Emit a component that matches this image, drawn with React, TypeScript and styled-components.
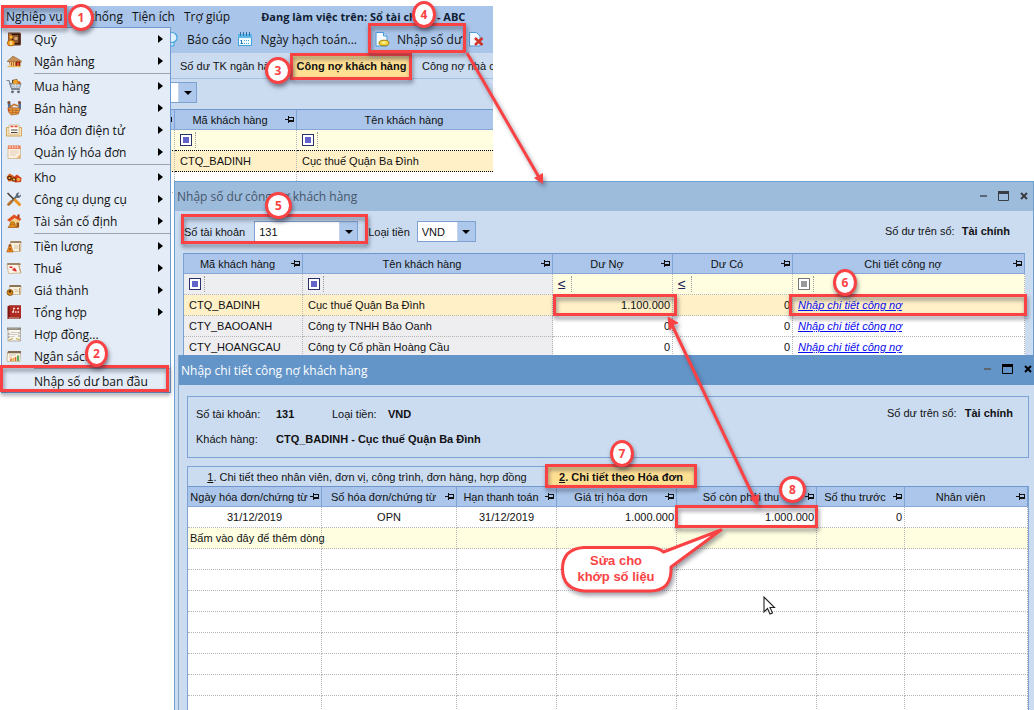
import React from "react";
import styled, { createGlobalStyle, css } from "styled-components";

const UI = `"Open Sans", "Noto Sans", sans-serif`;
const GRID = `"Liberation Sans", Arial, sans-serif`;
const RED = "#fa4244";

const Global = createGlobalStyle`
  *, *::before, *::after { box-sizing: border-box; }
  html, body { margin: 0; height: 100%; background: #fff; }
  body { font-family: ${GRID}; font-size: 11px; color: #111; overflow: hidden; }
  button, select { font: inherit; color: inherit; margin: 0; }
  button { border: 0; background: none; padding: 0; }
  a { color: #0a0af0; }
`;

const Desktop = styled.main`
  position: relative;
  min-height: 100vh;
  overflow: hidden;
  background: #fff;
`;

/* ---------- windows ---------- */

const AppWindow = styled.section`
  position: absolute;
  left: 1px;
  top: 6px;
  width: 492px;
  overflow: hidden;
  background: #cbdbf0;
`;

const BalanceWindow = styled.section`
  position: absolute;
  left: 174px;
  right: 0;
  top: 181px;
  bottom: 0;
  overflow: hidden;
  background: #cbdcf1;
  border: 1px solid #6d9fd2;
  border-bottom: 0;
`;

const DetailWindow = styled.section`
  position: absolute;
  left: 178px;
  right: 0;
  top: 355px;
  bottom: 0;
  overflow: hidden;
  background: #cbdcf1;
  border-left: 1px solid #86a6c8;
`;

const TitleBar = styled.header<{ $active?: boolean }>`
  display: flex;
  align-items: center;
  height: ${(p) => (p.$active ? 30 : 29)}px;
  padding: 0 ${(p) => (p.$active ? 0 : 3)}px 0 2px;
  font-family: ${UI};
  font-size: 12px;
  color: ${(p) => (p.$active ? "#fff" : "#46566a")};
  background: ${(p) => (p.$active ? "#6495c9" : "#9dbbdb")};
`;

const WindowTitle = styled.h2`
  flex: 1;
  margin: 0;
  font-size: 12px;
  font-weight: 400;
`;

const WindowButtons = styled.div<{ $dark?: boolean }>`
  display: flex;
  gap: 8px;
  padding-bottom: 2px;
  color: ${(p) => (p.$dark ? "#000" : "#3a3d42")};
  button { display: flex; width: 12px; height: 12px; }
`;

/* ---------- main window bars ---------- */

const MenuBar = styled.nav`
  display: flex;
  align-items: center;
  height: 21px;
  padding-left: 5px;
  gap: 9px;
  font-family: ${UI};
  font-size: 12px;
  white-space: nowrap;
  background: #a9c5e9;
`;

const MenuButton = styled.button`
  white-space: nowrap;
`;

const BookStatus = styled.strong`
  margin-left: 22px;
  font-size: 11px;
  font-weight: 700;
  color: #0f1c33;
`;

const Toolbar = styled.div`
  display: flex;
  align-items: center;
  height: 26px;
  padding: 0 0 2px 163px;
  font-family: ${UI};
  font-size: 12px;
  white-space: nowrap;
  background: #a9c5e9;
`;

const ToolButton = styled.button`
  display: flex;
  flex: none;
  align-items: center;
  gap: 7px;
  margin-right: 6px;
`;

const Grip = styled.span`
  width: 3px;
  height: 18px;
  margin: 0 3px 0 5px;
  border-left: 2px dotted #8aa9d3;
`;

const TabStrip = styled.div`
  display: flex;
  height: 26px;
  padding-left: 167px;
  align-items: stretch;
  background: #cbdcf1;
  border-bottom: 1px solid #a3bfe2;
`;

const MainTab = styled.button<{ $active?: boolean; $width?: number }>`
  flex: none;
  overflow: hidden;
  white-space: nowrap;
  text-align: left;
  ${(p) =>
    p.$active
      ? css`
          width: 117px;
          text-align: center;
          font-weight: 700;
          background: #ffdf92;
        `
      : css`
          width: ${p.$width}px;
          padding-left: 12px;
        `}
`;

const FilterPanel = styled.div`
  display: flex;
  height: 30px;
  padding: 3px 0 0 64px;
`;

const AppGrid = styled.div`
  margin-right: -20px;
`;

/* ---------- combo box ---------- */

const ComboFrame = styled.span<{ $width: number }>`
  display: grid;
  grid-template-columns: 1fr 18px;
  width: ${(p) => p.$width}px;
  height: 21px;
  border: 1px solid #7da2d2;
  background: #fff;
  select {
    grid-area: 1 / 1 / 2 / 3;
    min-width: 0;
    padding: 0 0 0 4px;
    border: 0;
    background: transparent;
    appearance: none;
    outline: 0;
  }
`;

const ComboArrow = styled.span`
  grid-area: 1 / 2;
  display: flex;
  align-items: center;
  justify-content: center;
  border-left: 1px solid #c3d5ec;
  background: #adc8eb;
  pointer-events: none;
`;

function Combo({ id, value, width, label }: { id: string; value: string; width: number; label?: string }) {
  return (
    <ComboFrame $width={width}>
      <ComboArrow>
        <svg width="8" height="4" viewBox="0 0 8 4"><path d="M0 0h8L4 4z" fill="#000" /></svg>
      </ComboArrow>
      <select id={id} defaultValue={value} aria-label={label}>
        <option value={value}>{value}</option>
      </select>
    </ComboFrame>
  );
}

/* ---------- grids ---------- */

const Grid = styled.table`
  width: 100%;
  table-layout: fixed;
  border-collapse: separate;
  border-spacing: 0;
  background: #fff;
`;

const Th = styled.th`
  height: 21px;
  padding: 0 1px 0 0;
  font-weight: 400;
  background: #abc6ea;
  border-top: 1px solid #7096cf;
  border-bottom: 1px solid #86a8d8;
  border-right: 1px solid #7ea3d6;
  & > div { display: flex; align-items: center; }
  span { flex: 1; white-space: nowrap; text-align: center; }
  svg { flex: none; }
`;

type Tone = "plain" | "filter" | "locked" | "current" | "new";
const tones: Record<Tone, string> = {
  plain: "#fff",
  filter: "#fffee0",
  locked: "#eeeef1",
  current: "#fff0c8",
  new: "#fffee0",
};

const Td = styled.td<{ $tone?: Tone; $align?: "left" | "center" | "right"; $strong?: boolean }>`
  height: 21px;
  padding: 0 2px 0 ${(p) => (p.$align ? 2 : 5)}px;
  overflow: visible;
  white-space: nowrap;
  text-align: ${(p) => p.$align ?? "left"};
  background: ${(p) => tones[p.$tone ?? "plain"]};
  border-right: 1px dotted #b5b5b5;
  border-bottom: 1px dotted ${(p) => (p.$strong ? "#000" : "#b5b5b5")};
`;

const FilterMark = styled.button<{ $muted?: boolean }>`
  display: flex;
  align-items: center;
  width: 16px;
  height: 16px;
  border-right: 1px dotted #999;
  &::before {
    content: "";
    width: 12px;
    height: 12px;
    border: 1px solid ${(p) => (p.$muted ? "#77777a" : "#2b2f6e")};
    background: ${(p) => (p.$muted ? "#999" : "#6264cc")};
    box-shadow: inset 0 0 0 2px #fff;
  }
`;

const CompareMark = styled.button`
  display: block;
  width: 14px;
  height: 16px;
  text-align: left;
  font-size: 14px;
  line-height: 16px;
  color: #23265c;
  border-right: 1px dotted #999;
`;

const Pin = () => (
  <svg width="10" height="7" viewBox="0 0 10 7" shapeRendering="crispEdges" fill="#111">
    <rect x="0" y="3" width="3" height="1" />
    <rect x="3" y="0" width="1" height="7" />
    <rect x="4" y="1" width="5" height="1" />
    <rect x="8" y="1" width="1" height="4" />
    <rect x="4" y="4" width="5" height="2" />
  </svg>
);

const Head = ({ children, pin = true }: { children?: React.ReactNode; pin?: boolean }) => (
  <Th scope="col">
    <div>
      <span>{children}</span>
      {pin && <Pin />}
    </div>
  </Th>
);

/* ---------- balance window body ---------- */

const BalanceForm = styled.form`
  display: flex;
  align-items: flex-start;
  padding: 10px 23px 10px 9px;
  label { line-height: 22px; }
`;

const FieldPair = styled.div<{ $gap: number; $after?: number }>`
  display: flex;
  gap: ${(p) => p.$gap}px;
  margin-right: ${(p) => p.$after ?? 0}px;
`;

const BookNote = styled.p`
  margin: 0 0 0 auto;
  line-height: 20px;
  strong { margin-left: 4px; }
`;

const BalanceGrid = styled.div`
  margin: 0 8px 0 8px;
  border-left: 1px solid #7da2d2;
`;

/* ---------- detail window body ---------- */

const InfoBox = styled.div`
  display: flex;
  justify-content: space-between;
  margin: 11px 5px 8px 8px;
  padding: 4px 15px 6px 8px;
  border: 1px solid #7ea2d6;
`;

const InfoList = styled.dl`
  display: grid;
  grid-template-columns: 80px 56px 56px auto;
  grid-auto-rows: 25px;
  align-items: center;
  margin: 0;
  dd { margin: 0; font-weight: 700; white-space: nowrap; }
  dd.wide { grid-column: 2 / 5; }
`;

const InfoNote = styled.p`
  margin: 0;
  line-height: 24px;
  strong { margin-left: 5px; }
`;

const DetailTabs = styled.div`
  display: flex;
  height: 20px;
  margin: 0 5px 0 8px;
`;

const DetailTab = styled.button<{ $active?: boolean }>`
  width: ${(p) => (p.$active ? 148 : 360)}px;
  border: 1px solid #7ea2d6;
  border-bottom: 0;
  white-space: nowrap;
  ${(p) => p.$active && css`font-weight: 700; background: #ffdf92;`}
`;

const DetailGrid = styled.div`
  margin: 0 5px 0 8px;
  border-left: 1px solid #7da2d2;
  border-right: 1px solid #7da2d2;
  td:first-child { padding-left: 2px; }
`;

/* ---------- drop-down menu ---------- */

const Popup = styled.ul`
  position: absolute;
  left: 1px;
  top: 27px;
  width: 170px;
  margin: 0;
  padding: 0;
  list-style: none;
  background: #e3ecf7;
  border: 1px solid #6d9ad0;
  font-family: ${UI};
  font-size: 12px;
`;

const PopupItem = styled.li<{ $divided?: boolean }>`
  ${(p) =>
    p.$divided &&
    css`
      padding-bottom: 1px;
      &::after {
        content: "";
        display: block;
        height: 1px;
        margin: 1px 0 0 32px;
        background: #9ba3ad;
      }
    `}
  button {
    display: grid;
    grid-template-columns: 16px 1fr 5px;
    column-gap: 12px;
    align-items: center;
    width: 100%;
    height: 22px;
    padding: 0 7px 0 4px;
    text-align: left;
    white-space: nowrap;
  }
`;

const Icon = ({ children, size = 16 }: { children: React.ReactNode; size?: number }) => (
  <svg width={size} height={size} viewBox="0 0 16 16">{children}</svg>
);

const icons: Record<string, React.ReactNode> = {
  safe: (
    <Icon>
      <path d="M2 1.500h12l1 1v11l-1 1H2z" fill="#6b3a22" />
      <path d="M2.500 2l3 1v11l-3-.500z" fill="#b3764a" />
      <path d="M6 3h7.500v10H6z" fill="#2d1208" />
      <path d="M7 4h5.500v8H7z" fill="#8f5631" />
      <circle cx="10" cy="7.500" r="1.800" fill="#d9a877" />
      <circle cx="5" cy="6" r="2" fill="#f4b32f" stroke="#a35d10" strokeWidth=".6" />
      <ellipse cx="5" cy="12" rx="3.800" ry="3" fill="#f09c1d" stroke="#96480a" strokeWidth=".6" />
      <path d="M5 10v4M3.800 11h2.400M3.800 13h2.400" stroke="#fff0b5" strokeWidth=".8" />
    </Icon>
  ),
  bank: (
    <Icon>
      <path d="M1 8.500L7 3l8.500 5-.5 1.500z" fill="#c79058" stroke="#8c5a30" strokeWidth=".6" />
      <path d="M3 8.500h11.500V13H4z" fill="#b3682c" />
      <path d="M4.500 9v4M6.500 9v4M8.500 9v4" stroke="#f0c27a" strokeWidth="1" />
      <path d="M10 8.500h4V13h-4z" fill="#8b2412" />
      <path d="M11 9.500h2V13h-2z" fill="#e05326" />
      <path d="M1.500 13.500h13.500" stroke="#e8b85a" strokeWidth="1.400" />
    </Icon>
  ),
  cart: (
    <Icon>
      <path d="M.5 2.500h2.500L6 11.500h8" stroke="#7b8794" fill="none" strokeWidth="1.200" />
      <path d="M3.500 5.500h11.500l-1.500 5H5.500z" fill="#9aa7b4" stroke="#5e6b78" strokeWidth=".7" />
      <path d="M6 2l5-1 2 4H6z" fill="#5a4636" />
      <circle cx="9.500" cy="4" r="2.500" fill="#f0a32b" />
      <circle cx="13" cy="4.500" r="1.600" fill="#cf6a1a" />
      <path d="M5 7.500h9.500M5.500 9.200h8.500M7 6v4M9.500 6v4M12 6v4" stroke="#e6edf3" strokeWidth=".6" />
      <circle cx="6.500" cy="13.800" r="1.400" fill="#59646f" />
      <circle cx="12.500" cy="13.800" r="1.400" fill="#59646f" />
    </Icon>
  ),
  basket: (
    <Icon>
      <path d="M1.500 2h2.500l1.500 6-3 3z" fill="#4d6f97" />
      <path d="M12.500 2h2.500v7l-3 3z" fill="#54709a" />
      <circle cx="3" cy="2.500" r="1.400" fill="#8a4b28" />
      <circle cx="13.500" cy="2.500" r="1.400" fill="#8a4b28" />
      <path d="M4 7l4-2.500L12.500 6" stroke="#c97a35" strokeWidth="1.800" fill="none" />
      <path d="M2 7.500l12 .500-1.500 6L5 15l-2.500-3z" fill="#e39a45" stroke="#a2581a" strokeWidth=".6" />
      <path d="M3 10l10.500.500M4 12.500h9M6.500 8v6.500M10 8v6" stroke="#b9641f" strokeWidth=".7" />
      <path d="M1.500 8l2.500 2-1 2z" fill="#cf3d1c" />
    </Icon>
  ),
  einvoice: (
    <Icon>
      <path d="M.5 5.500h15V14H.5z" fill="#f6e3b8" stroke="#d0a050" strokeWidth=".9" />
      <path d="M3 3h10v9H3z" fill="#fffdf8" stroke="#c9ac7c" strokeWidth=".7" />
      <path d="M4.500 4.500h3M8.500 4.500h3" stroke="#e4482c" strokeWidth="1.600" />
      <path d="M5 8h6.500M5 10.500h6.500" stroke="#4d4238" strokeWidth="1.200" />
    </Icon>
  ),
  invoices: (
    <Icon>
      <path d="M2 2h12.500v12.500H2z" fill="#fbf0e0" stroke="#d0b48c" strokeWidth=".8" />
      <path d="M2 1.500h12.500V5H2z" fill="#ef8465" />
      <path d="M4 2v2M6.500 2v2M9 2v2M11.500 2v2" stroke="#fde7dc" strokeWidth=".8" />
      <path d="M4 7h8.500M4 9h8.500M4 11h6" stroke="#e0c4ae" strokeWidth=".8" />
      <path d="M10 14.500l4.500-4.500v4.500z" fill="#e9b57a" />
    </Icon>
  ),
  stock: (
    <Icon>
      <path d="M.5 8l3-3.500L8 7l-.5 5-5 .5z" fill="#d9601d" />
      <path d="M7 8.500l4-3 4.500 3.500-.5 4-6 .5z" fill="#d33f1c" />
      <circle cx="3.500" cy="9" r="2.300" fill="#5e2509" />
      <circle cx="3.500" cy="9" r="1.100" fill="#f4b747" />
      <circle cx="8" cy="10.500" r="2.200" fill="#6b3008" />
      <circle cx="8" cy="10.500" r="1.100" fill="#f7c95c" />
      <circle cx="12.500" cy="10.500" r="1.800" fill="#f0a83a" />
    </Icon>
  ),
  tools: (
    <Icon>
      <path d="M3.500 12.500L11 5" stroke="#5d6a78" strokeWidth="2" />
      <path d="M10 5.500a3 3 0 0 1 3.500-4L12 3.500l.5 1 1.200.200L15 3.300a3 3 0 0 1-4 3.500z" fill="#5d6a78" />
      <path d="M2 2.500l6 6" stroke="#4b4038" strokeWidth="1.700" strokeLinecap="round" />
      <path d="M9 9l4.500 4.500" stroke="#ec9320" strokeWidth="3" strokeLinecap="round" />
      <path d="M2.500 13.500l3-3" stroke="#b5722c" strokeWidth="2.800" strokeLinecap="round" />
    </Icon>
  ),
  house: (
    <Icon>
      <path d="M1 7l7-5.500L15.500 6l-2 2-5-3L4 9z" fill="#e0531f" />
      <path d="M11.500 1.500h2V5h-2z" fill="#b43213" />
      <path d="M4 8.500l4.500-3L13.500 8v6.500H4z" fill="#f7d38a" />
      <path d="M10.500 9.500h2.500v5h-2.500z" fill="#96501a" />
      <circle cx="6.500" cy="11" r="2.300" fill="#f3a71e" stroke="#8d4a0a" strokeWidth=".7" />
      <path d="M2 14.500l2.500-3.500h4L11 14.500z" fill="#e58a1c" stroke="#8d4a0a" strokeWidth=".6" />
    </Icon>
  ),
  payroll: (
    <Icon>
      <path d="M4.500 4H15l-.5 9.500H4z" fill="#f9efdc" stroke="#c4ae88" strokeWidth=".8" />
      <path d="M4.500 3h10.500l.5 2H4.500z" fill="#a08767" />
      <path d="M13.500 6v7" stroke="#c39a67" />
      <path d="M8 8h4.500M8 10h4.500" stroke="#ccbb9f" strokeWidth=".8" />
      <circle cx="4" cy="7.500" r="1.500" fill="#a3551f" />
      <path d="M.8 14l2-5.500h2.400l2 5.500z" fill="#ef8a1e" stroke="#a8520c" strokeWidth=".6" />
      <path d="M4 10v2.500" stroke="#7c3606" />
    </Icon>
  ),
  tax: (
    <Icon>
      <path d="M1 4.500h11.500L15 13 2.500 13.500z" fill="#fcf4e8" stroke="#c4ae88" strokeWidth=".8" />
      <path d="M1 3h13l1 2H1.500z" fill="#a08767" />
      <path d="M3.500 7l3 .5M6.500 9.500l4 1.500M8 8l1.500 3" stroke="#e0332f" strokeWidth="1.700" />
      <path d="M13 5.500l1.500 7" stroke="#c39a67" />
    </Icon>
  ),
  costing: (
    <Icon>
      <path d="M3.500 4.500H15l-.5 8H4z" fill="#f9efdc" stroke="#c4ae88" strokeWidth=".8" />
      <path d="M3.500 3h11l1 2h-12z" fill="#8d7456" />
      <path d="M8 7.500l4 .5M8.500 9.500h4" stroke="#ccbb9f" strokeWidth=".8" />
      <path d="M13.500 6v6" stroke="#c39a67" />
      <circle cx="4" cy="10.500" r="3" fill="#d68a1a" stroke="#71420b" strokeWidth=".7" />
      <circle cx="4" cy="9.500" r="1.200" fill="#4b2a08" />
    </Icon>
  ),
  ledger: (
    <Icon>
      <path d="M1.500 2.500l1.500-1h12v12.500l-1.500 1h-12z" fill="#7d1613" />
      <path d="M3.500 1.500H15V13H3.500z" fill="#b02a24" />
      <path d="M7 4.500h2M11 4.500h2M6 8h2M9 8h1.500M11.500 8h1.500M7 6.500h1" stroke="#f9e2d6" strokeWidth="1.400" />
      <path d="M2.500 14h11" stroke="#e6cdb8" strokeWidth="1" />
    </Icon>
  ),
  contract: (
    <Icon>
      <path d="M2 3h12.500v12H2z" fill="#f8f6ef" stroke="#a5a196" strokeWidth=".8" />
      <path d="M1 1.500h14v2.500H1z" fill="#8c887c" />
      <path d="M2.500 2.800h10" stroke="#d8d4c8" strokeWidth=".7" strokeDasharray="1 1" />
      <path d="M4.500 6.500h7M4.500 8.500h7M4.500 10.500h4" stroke="#c3bfb4" strokeWidth=".8" />
      <path d="M3 7v6M13 6v5" stroke="#76726a" strokeWidth=".8" strokeDasharray="2 1" />
      <path d="M3 14l4-1.500M10 12.500l4 1.500" stroke="#c6a94c" strokeWidth="1.200" />
    </Icon>
  ),
  budget: (
    <Icon>
      <path d="M1.500 4.500h13L14 13.500H1z" fill="#fbf3e4" stroke="#c4ae88" strokeWidth=".8" />
      <path d="M2 3h13v2.200H1.500z" fill="#7f6b50" />
      <path d="M3 7h7M3 9h3" stroke="#ccbb9f" strokeWidth=".8" />
      <path d="M5 13v-2.500M9.500 13V9" stroke="#e8632f" strokeWidth="1.600" />
      <path d="M7.200 13v-3" stroke="#e9b43a" strokeWidth="1.600" />
      <path d="M12 13V7.500" stroke="#49a840" strokeWidth="1.800" />
    </Icon>
  ),
};

type Entry = { label: string; icon?: string; sub?: boolean; divided?: boolean };
const entries: Entry[] = [
  { label: "Quỹ", icon: "safe", sub: true },
  { label: "Ngân hàng", icon: "bank", sub: true, divided: true },
  { label: "Mua hàng", icon: "cart", sub: true },
  { label: "Bán hàng", icon: "basket", sub: true },
  { label: "Hóa đơn điện tử", icon: "einvoice", sub: true },
  { label: "Quản lý hóa đơn", icon: "invoices", sub: true, divided: true },
  { label: "Kho", icon: "stock", sub: true },
  { label: "Công cụ dụng cụ", icon: "tools", sub: true },
  { label: "Tài sản cố định", icon: "house", sub: true, divided: true },
  { label: "Tiền lương", icon: "payroll", sub: true },
  { label: "Thuế", icon: "tax", sub: true },
  { label: "Giá thành", icon: "costing", sub: true },
  { label: "Tổng hợp", icon: "ledger", sub: true },
  { label: "Hợp đồng...", icon: "contract" },
  { label: "Ngân sách", icon: "budget", divided: true },
  { label: "Nhập số dư ban đầu" },
];

/* ---------- tutorial marks drawn over the windows ---------- */

const Frame = styled.div<{ $x: number; $y: number; $w: number; $h: number }>`
  position: absolute;
  left: ${(p) => p.$x}px;
  top: ${(p) => p.$y}px;
  width: ${(p) => p.$w}px;
  height: ${(p) => p.$h}px;
  border: 3px solid ${RED};
  pointer-events: none;
  filter: drop-shadow(1px 3px 2px rgba(40, 40, 60, 0.55));
`;

const Badge = styled.div<{ $x: number; $y: number; $w?: number }>`
  position: absolute;
  left: ${(p) => p.$x}px;
  top: ${(p) => p.$y}px;
  display: flex;
  align-items: center;
  justify-content: center;
  width: ${(p) => p.$w ?? 26}px;
  height: 27px;
  border: 3px solid ${RED};
  border-radius: 50%;
  background: #fff;
  color: ${RED};
  font-family: ${UI};
  font-size: 12px;
  font-weight: 700;
  box-shadow: 1px 3px 4px rgba(40, 40, 60, 0.55);
`;

const Marks = styled.svg`
  position: absolute;
  left: 0;
  top: 0;
  pointer-events: none;
  filter: drop-shadow(2px 3px 2px rgba(40, 40, 60, 0.45));
`;

const CalloutText = styled.p`
  position: absolute;
  left: 563px;
  top: 553px;
  width: 106px;
  margin: 0;
  text-align: center;
  font-size: 13px;
  line-height: 16px;
  font-weight: 700;
  color: ${RED};
`;

const Pointer = styled.svg`
  position: absolute;
  left: 763px;
  top: 596px;
`;

const Buttons = ({ dark }: { dark?: boolean }) => (
  <WindowButtons $dark={dark}>
    <button aria-label="Thu nhỏ">
      <svg width="12" height="12"><path d="M2 6h7" stroke={dark ? "#5f6672" : "#56677c"} strokeWidth="2" /></svg>
    </button>
    <button aria-label="Phóng to">
      <svg width="12" height="12"><path d="M.5 3v7.500h10V3" stroke="currentColor" fill="none" /><path d="M0 2.500h11" stroke="currentColor" strokeWidth="3" /></svg>
    </button>
    <button aria-label="Đóng">
      <svg width="12" height="12"><path d="M3 3l6 6M9 3l-6 6" stroke="currentColor" strokeWidth="2" /></svg>
    </button>
  </WindowButtons>
);

const customers = [
  { code: "CTQ_BADINH", name: "Cục thuế Quận Ba Đình", debit: "1.100.000", current: true },
  { code: "CTY_BAOOANH", name: "Công ty TNHH Bảo Oanh", debit: "0" },
  { code: "CTY_HOANGCAU", name: "Công ty Cổ phần Hoàng Cầu", debit: "0" },
];

function MainWindow() {
  return (
    <AppWindow>
      <MenuBar>
        <MenuButton>Nghiệp vụ</MenuButton>
        <MenuButton>Hệ thống</MenuButton>
        <MenuButton>Tiện ích</MenuButton>
        <MenuButton>Trợ giúp</MenuButton>
        <BookStatus>Đang làm việc trên: Sổ tài chính - ABC</BookStatus>
      </MenuBar>
      <Toolbar>
        <ToolButton>
          <Icon>
            <circle cx="8" cy="6.500" r="5" fill="#dff1fd" stroke="#3fa3dc" strokeWidth="1.200" />
            <path d="M6 11.500h4V15H6z" fill="#bfe3f8" stroke="#3fa3dc" />
          </Icon>
          Báo cáo
        </ToolButton>
        <ToolButton>
          <Icon>
            <path d="M1.500 3.500h13v11h-13z" fill="#f3fbff" stroke="#3fa3dc" />
            <path d="M1 3h14v4H1z" fill="#5db7e8" />
            <path d="M3.500 1v4M6.500 1v4M9.500 1v4M12.500 1v4" stroke="#2f6fa8" />
            <path d="M4.500 9v4M3.500 9.500h1M3.500 12.500h2.500" stroke="#1f79bd" />
            <path d="M7 9.500h6M7 12.500h6" stroke="#3fa3dc" strokeDasharray="1 1" />
          </Icon>
          Ngày hạch toán...
        </ToolButton>
        <Grip />
        <ToolButton>
          <Icon>
            <path d="M2 1.500h7.500l3.500 3.500v10H2z" fill="#f4faff" stroke="#4b9bd8" />
            <path d="M9.500 1.500V5H13" fill="#bfe0f7" stroke="#4b9bd8" />
            <ellipse cx="10" cy="12" rx="5" ry="2.800" fill="#efd23c" stroke="#a58312" />
            <ellipse cx="10" cy="11.500" rx="2.500" ry="1" fill="#fff39a" />
          </Icon>
          Nhập số dư
        </ToolButton>
        <ToolButton aria-label="Xóa số dư">
          <Icon>
            <path d="M1.500 1.500h7l3.500 3.500v10H1.500z" fill="#f4faff" stroke="#4b9bd8" />
            <path d="M7 7l7.500 7M14.500 7L7 14" stroke="#d0342a" strokeWidth="2.600" />
          </Icon>
        </ToolButton>
      </Toolbar>
      <TabStrip>
        <MainTab $width={125}>Số dư TK ngân hàng</MainTab>
        <MainTab $active>Công nợ khách hàng</MainTab>
        <MainTab $width={130}>Công nợ nhà cung cấp</MainTab>
      </TabStrip>
      <FilterPanel>
        <Combo id="period" value="" width={132} label="Kỳ" />
      </FilterPanel>
      <AppGrid>
        <Grid>
          <colgroup><col style={{ width: 174 }} /><col style={{ width: 122 }} /><col /></colgroup>
          <thead><tr><Head /><Head>Mã khách hàng</Head><Head pin={false}>Tên khách hàng</Head></tr></thead>
          <tbody>
            <tr>
              <Td $tone="filter" $strong />
              <Td $tone="filter" $strong><FilterMark aria-label="Lọc mã" /></Td>
              <Td $tone="filter" $strong><FilterMark aria-label="Lọc tên" /></Td>
            </tr>
            <tr>
              <Td $tone="current" $strong />
              <Td $tone="current" $strong>CTQ_BADINH</Td>
              <Td $tone="current" $strong>Cục thuế Quận Ba Đình</Td>
            </tr>
            <tr><Td /><Td /><Td /></tr>
          </tbody>
        </Grid>
      </AppGrid>
    </AppWindow>
  );
}

function Balances() {
  return (
    <BalanceWindow>
      <TitleBar>
        <WindowTitle>Nhập số dư công nợ khách hàng</WindowTitle>
        <Buttons />
      </TitleBar>
      <BalanceForm>
        <FieldPair $gap={9} $after={10}>
          <label htmlFor="account">Số tài khoản</label>
          <Combo id="account" value="131" width={104} />
        </FieldPair>
        <FieldPair $gap={7}>
          <label htmlFor="currency">Loại tiền</label>
          <Combo id="currency" value="VND" width={59} />
        </FieldPair>
        <BookNote>Số dư trên sổ: <strong>Tài chính</strong></BookNote>
      </BalanceForm>
      <BalanceGrid>
        <Grid>
          <colgroup>
            <col style={{ width: 119 }} /><col style={{ width: 250 }} />
            <col style={{ width: 120 }} /><col style={{ width: 120 }} /><col />
          </colgroup>
          <thead>
            <tr>
              <Head>Mã khách hàng</Head><Head>Tên khách hàng</Head>
              <Head>Dư Nợ</Head><Head>Dư Có</Head><Head>Chi tiết công nợ</Head>
            </tr>
          </thead>
          <tbody>
            <tr>
              <Td $tone="locked"><FilterMark aria-label="Lọc mã" /></Td>
              <Td $tone="locked"><FilterMark aria-label="Lọc tên" /></Td>
              <Td $tone="filter"><CompareMark>≤</CompareMark></Td>
              <Td $tone="filter"><CompareMark>≤</CompareMark></Td>
              <Td $tone="filter"><FilterMark $muted aria-label="Lọc chi tiết" /></Td>
            </tr>
            {customers.map((c) => (
              <tr key={c.code}>
                <Td $tone={c.current ? "current" : "locked"}>{c.code}</Td>
                <Td $tone={c.current ? "current" : "locked"}>{c.name}</Td>
                <Td $tone={c.current ? "current" : "plain"} $align="right">{c.debit}</Td>
                <Td $tone={c.current ? "current" : "plain"} $align="right">0</Td>
                <Td $tone={c.current ? "current" : "plain"}><a href="#detail"><i>Nhập chi tiết công nợ</i></a></Td>
              </tr>
            ))}
          </tbody>
        </Grid>
      </BalanceGrid>
    </BalanceWindow>
  );
}

function Details() {
  const blank = [1, 2, 3, 4, 5, 6, 7, 8];
  const cols = [0, 1, 2, 3, 4, 5, 6];
  return (
    <DetailWindow id="detail">
      <TitleBar $active>
        <WindowTitle>Nhập chi tiết công nợ khách hàng</WindowTitle>
        <Buttons dark />
      </TitleBar>
      <InfoBox>
        <InfoList>
          <dt>Số tài khoản:</dt><dd>131</dd>
          <dt>Loại tiền:</dt><dd>VND</dd>
          <dt>Khách hàng:</dt><dd className="wide">CTQ_BADINH - Cục thuế Quận Ba Đình</dd>
        </InfoList>
        <InfoNote>Số dư trên sổ: <strong>Tài chính</strong></InfoNote>
      </InfoBox>
      <DetailTabs>
        <DetailTab><u>1</u>. Chi tiết theo nhân viên, đơn vị, công trình, đơn hàng, hợp đồng</DetailTab>
        <DetailTab $active><u>2</u>. Chi tiết theo Hóa đơn</DetailTab>
      </DetailTabs>
      <DetailGrid>
        <Grid>
          <colgroup>
            <col style={{ width: 134 }} /><col style={{ width: 135 }} /><col style={{ width: 100 }} />
            <col style={{ width: 120 }} /><col style={{ width: 140 }} /><col style={{ width: 88 }} /><col />
          </colgroup>
          <thead>
            <tr>
              <Head>Ngày hóa đơn/chứng từ</Head><Head>Số hóa đơn/chứng từ</Head>
              <Head>Hạn thanh toán</Head><Head>Giá trị hóa đơn</Head>
              <Head>Số còn phải thu</Head><Head>Số thu trước</Head><Head>Nhân viên</Head>
            </tr>
          </thead>
          <tbody>
            <tr>
              <Td $align="center">31/12/2019</Td>
              <Td $align="center">OPN</Td>
              <Td $align="center">31/12/2019</Td>
              <Td $align="right">1.000.000</Td>
              <Td $align="right">1.000.000</Td>
              <Td $align="right">0</Td>
              <Td />
            </tr>
            <tr>
              {cols.map((c) => <Td key={c} $tone="new">{c === 0 && "Bấm vào đây để thêm dòng"}</Td>)}
            </tr>
            {blank.map((r) => <tr key={r}>{cols.map((c) => <Td key={c} />)}</tr>)}
          </tbody>
        </Grid>
      </DetailGrid>
    </DetailWindow>
  );
}

export default function App() {
  return (
    <Desktop>
      <Global />
      <MainWindow />
      <Balances />
      <Details />
      <Popup>
        {entries.map((e) => (
          <PopupItem key={e.label} $divided={e.divided}>
            <button>
              {e.icon ? icons[e.icon] : <span />}
              <span>{e.label}</span>
              {e.sub && <svg width="5" height="8"><path d="M0 0l5 4-5 4z" fill="#000" /></svg>}
            </button>
          </PopupItem>
        ))}
      </Popup>

      <Frame $x={1} $y={5} $w={66} $h={23} />
      <Frame $x={0} $y={365} $w={169} $h={27} />
      <Frame $x={290} $y={53} $w={122} $h={27} />
      <Frame $x={368} $y={23} $w={98} $h={30} />
      <Frame $x={181} $y={214} $w={187} $h={30} />
      <Frame $x={553} $y={294} $w={124} $h={22} />
      <Frame $x={789} $y={294} $w={238} $h={22} />
      <Frame $x={545} $y={464} $w={152} $h={24} />
      <Frame $x={675} $y={505} $w={143} $h={23} />
      <Marks width="1034" height="710" viewBox="0 0 1034 710">
        <path d="M467 53L540 179" stroke={RED} strokeWidth="3" />
        <path d="M543 184l-9-6 9-5z" fill={RED} />
        <path d="M672 325L755 500" stroke={RED} strokeWidth="3" />
        <path d="M668 317l10 6-4 1-4 6z" fill={RED} stroke={RED} strokeLinejoin="round" />
        <path d="M758 507l-8-9 9-4z" fill={RED} />
        <path
          d="M584 547.500H650Q658 547.500 663.500 552L721 530 671 567Q672 591 650 591H584Q562.500 589 562.500 569Q562.500 549 584 547.500Z"
          fill="#fff" stroke={RED} strokeWidth="3" strokeLinejoin="round"
        />
      </Marks>
      <CalloutText>Sửa cho<br />khớp số liệu</CalloutText>
      <Badge $x={68} $y={4}>1</Badge>
      <Badge $x={85} $y={340} $w={23}>2</Badge>
      <Badge $x={265} $y={57}>3</Badge>
      <Badge $x={412} $y={1} $w={24}>4</Badge>
      <Badge $x={265} $y={192} $w={27}>5</Badge>
      <Badge $x={833} $y={269} $w={24}>6</Badge>
      <Badge $x={610} $y={440} $w={24}>7</Badge>
      <Badge $x={779} $y={476} $w={27}>8</Badge>
      <Pointer width="13" height="20" viewBox="0 0 13 20">
        <path d="M1 1v15l3.500-3.500L7 18l2.500-1L7 11.500h4.500z" fill="#fff" stroke="#222" strokeWidth="1.100" />
      </Pointer>
    </Desktop>
  );
}
